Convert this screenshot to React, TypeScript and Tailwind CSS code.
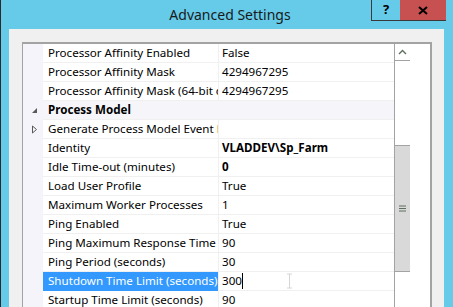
import React from "react";

type Row = { name: string; value?: string; bold?: boolean; category?: boolean; expander?: "open" | "closed"; selected?: boolean };

const rows: Row[] = [
  { name: "Processor Affinity Enabled", value: "False" },
  { name: "Processor Affinity Mask", value: "4294967295" },
  { name: "Processor Affinity Mask (64-bit option)", value: "4294967295" },
  { name: "Process Model", category: true, expander: "open" },
  { name: "Generate Process Model Event Log Entry", value: "", expander: "closed" },
  { name: "Identity", value: "VLADDEV\\Sp_Farm", bold: true },
  { name: "Idle Time-out (minutes)", value: "0", bold: true },
  { name: "Load User Profile", value: "True" },
  { name: "Maximum Worker Processes", value: "1" },
  { name: "Ping Enabled", value: "True" },
  { name: "Ping Maximum Response Time (seconds)", value: "90" },
  { name: "Ping Period (seconds)", value: "30" },
  { name: "Shutdown Time Limit (seconds)", value: "300", selected: true },
  { name: "Startup Time Limit (seconds)", value: "90" },
];

function Expander({ kind }: { kind: "open" | "closed" }) {
  if (kind === "open") {
    return (
      <svg width="7" height="7" viewBox="0 0 7 7">
        <path d="M6 1 L6 6 L1 6 Z" fill="#595959" />
      </svg>
    );
  }
  return (
    <svg width="7" height="9" viewBox="0 0 7 9">
      <path d="M1.5 1 L5.5 4.5 L1.5 8 Z" fill="none" stroke="#595959" strokeWidth="1" />
    </svg>
  );
}

export default function App() {
  return (
    <div
      className="w-[453px] h-[307px] overflow-hidden bg-[#65cbe9] border-l border-[#2b2b2b] flex flex-col relative"
      style={{ fontFamily: '"Noto Sans", "Open Sans", sans-serif' }}
    >
      {/* Title bar */}
      <div className="h-[29px] flex items-center justify-center shrink-0">
        <span className="text-[14px] text-[#1a1a1a] pl-[6px] pb-[1px]">Advanced Settings</span>
      </div>
      <div className="absolute top-0 left-[370px] flex">
        <div className="w-[29px] h-[21px] border-l border-b border-[#3a3a3a] flex items-center justify-center text-[13px] font-bold text-black">
          ?
        </div>
        <div className="w-[46px] h-[21px] bg-[#c75050] border-b border-[#3a3a3a] flex items-center justify-center">
          <svg width="10" height="9" viewBox="0 0 10 9">
            <path d="M1 1 L9 8 M9 1 L1 8" stroke="#000" strokeWidth="2" />
          </svg>
        </div>
      </div>

      {/* Client area */}
      <div className="flex-1 flex pl-[8px] pr-[9px]">
        <div className="flex-1 bg-[#f0f0f0] pt-[13px] pl-[13px] pr-[12px] flex">
          <div className="flex-1 flex border-l border-t-2 border-r-2 border-[#a3a3a3] bg-white">
            {/* Grid rows */}
            <div className="w-[371px] flex flex-col">
              {rows.map((r, i) => (
                <div
                  key={i}
                  className={
                    "h-[19px] flex text-[11.6px] leading-[18px] " + (r.category ? "bg-[#f6f6fa]" : "")
                  }
                >
                  <div className="w-[20px] shrink-0 bg-[#f4f4fa] flex items-center justify-center pl-[2px]">
                    {r.expander ? <Expander kind={r.expander} /> : null}
                  </div>
                  {r.category ? (
                    <div className="flex-1 border-b border-[#f0f0f0] pl-[5px] font-bold text-black">{r.name}</div>
                  ) : (
                    <>
                      <div
                        className={
                          "w-[175px] shrink-0 border-b overflow-hidden whitespace-nowrap pl-[5px] pr-[1px] " +
                          (r.selected ? "bg-[#3399ff] text-white border-[#3399ff]" : "text-black border-[#f0f0f0]")
                        }
                      >
                        {r.name}
                      </div>
                      <div className="w-px shrink-0 bg-[#f0f0f0]" />
                      <div
                        className={
                          "flex-1 border-b border-[#f0f0f0] pl-[3px] whitespace-nowrap overflow-hidden text-black flex items-stretch " +
                          (r.bold ? "font-bold" : "")
                        }
                      >
                        <span>{r.value}</span>
                        {r.selected ? (
                          <>
                            <span className="w-px bg-black my-[1px]" />
                            <span className="ml-[43px] flex items-center">
                              <svg width="7" height="16" viewBox="0 0 7 16">
                                <path d="M1 1 L6 1 M3.5 1 L3.5 15 M1 15 L6 15" stroke="#d6d6d6" strokeWidth="1" fill="none" />
                              </svg>
                            </span>
                          </>
                        ) : null}
                      </div>
                    </>
                  )}
                </div>
              ))}
            </div>
            {/* Scrollbar */}
            <div className="w-[16px] shrink-0 border-l border-[#a3a3a3] flex flex-col bg-white">
              <div className="h-[17px] border-b border-[#a3a3a3] flex items-center justify-center">
                <svg width="9" height="6" viewBox="0 0 9 6">
                  <path d="M1 5 L4.5 1.5 L8 5" stroke="#5e6e5e" strokeWidth="1.4" fill="none" />
                </svg>
              </div>
              <div className="h-[84px]" />
              <div className="h-[127px] bg-[#d9d9d9] border-y border-[#a3a3a3] flex items-center justify-center">
                <svg width="7" height="7" viewBox="0 0 7 7">
                  <path d="M0 1 H7 M0 3.5 H7 M0 6 H7" stroke="#5e6e5e" strokeWidth="1.2" />
                </svg>
              </div>
              <div className="flex-1" />
            </div>
          </div>
        </div>
      </div>
    </div>
  );
}
